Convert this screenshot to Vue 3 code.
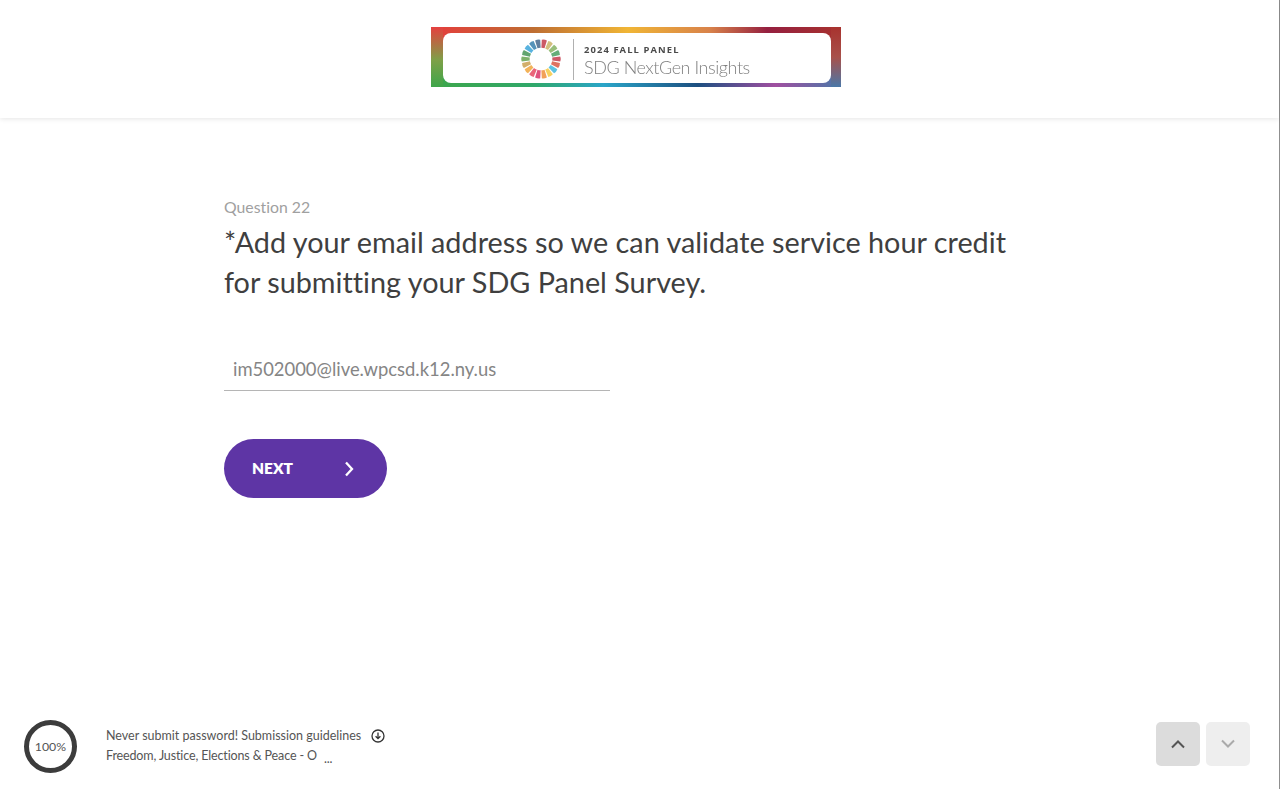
<script setup>
const colors = ['#c0303f','#c9b060','#7fae5a','#3f9a58','#c23040','#d8503a','#35b4dc','#f5c63a','#f08a30','#d8285f','#e5405a','#f0a030','#c79a45','#5f9e45','#3c8e4c','#2fa0d8','#2c78a8','#3a5f85']
const wedges = colors.map((color, i) => ({ color, angle: i * 20 + 10 }))
</script>

<template>
  <div class="page">
    <header class="top">
      <div class="banner">
        <div class="banner-inner">
          <svg class="wheel" width="40" height="40" viewBox="0 0 40 40">
            <path
              v-for="w in wedges"
              :key="w.angle"
              d="M17.400 0.800 Q20 -0.300 22.600 0.800 L21.600 8.800 Q20 8.500 18.400 8.800 Z"
              :fill="w.color"
              :transform="`rotate(${w.angle} 20 20)`"
            />
          </svg>
          <span class="divider"></span>
          <div class="banner-text">
            <div class="fall">2024 FALL PANEL</div>
            <div class="insights">SDG NextGen Insights</div>
          </div>
        </div>
      </div>
    </header>

    <main class="main">
      <div class="qnum">Question 22</div>
      <h1 class="title">*Add your email address so we can validate service hour credit for submitting your SDG Panel Survey.</h1>
      <div class="field">im502000@live.wpcsd.k12.ny.us</div>
      <button class="next">
        <span class="next-label">NEXT</span>
        <svg width="12" height="16" viewBox="0 0 12 16"><path d="M3 1.500 9 8l-6 6.500" fill="none" stroke="#fff" stroke-width="2.300"/></svg>
      </button>
    </main>

    <footer class="foot">
      <div class="progress">100%</div>
      <div class="notes">
        <div class="note-row">
          <span>Never submit password! Submission guidelines</span>
          <svg class="dl" width="14" height="14" viewBox="0 0 14 14">
            <circle cx="7" cy="7" r="6" fill="none" stroke="#333" stroke-width="1.300"/>
            <path d="M7 3.500v6M4.600 7.200 7 9.600l2.400-2.400" fill="none" stroke="#333" stroke-width="1.300"/>
          </svg>
        </div>
        <div class="note-row second">
          <span>Freedom, Justice, Elections &amp; Peace - O</span>
          <span class="dots">...</span>
        </div>
      </div>
      <div class="arrows">
        <button class="arrow up">
          <svg width="16" height="10" viewBox="0 0 16 10"><path d="M2 8.500 8 2.500l6 6" fill="none" stroke="#555" stroke-width="2"/></svg>
        </button>
        <button class="arrow down">
          <svg width="16" height="10" viewBox="0 0 16 10"><path d="M2 1.500l6 6 6-6" fill="none" stroke="#aaa" stroke-width="2"/></svg>
        </button>
      </div>
    </footer>
  </div>
</template>

<style>
html, body { margin: 0; background: #fff; overflow: hidden; }
</style>

<style scoped>
.page {
  height: 789px;
  display: flex;
  flex-direction: column;
  box-sizing: border-box;
  border-right: 1px solid #8f8f8f;
  font-family: "Lato", "Noto Sans", sans-serif;
  font-variant-ligatures: none;
  color: #3c3c3c;
  background: #fff;
}
.top {
  height: 118px;
  flex: none;
  display: flex;
  justify-content: center;
  align-items: flex-start;
  padding-top: 27px;
  box-sizing: border-box;
  box-shadow: 0 1px 5px rgba(0,0,0,.1);
}
.banner {
  width: 410px;
  height: 60px;
  margin-right: 7px;
  box-sizing: border-box;
  padding: 6px 10px 4px 12px;
  background:
    linear-gradient(180deg, #e5403f 0%, #7ea048 55%, #3ea64a 100%) left / 12px 100% no-repeat,
    linear-gradient(180deg, #a8322e 0%, #a8504a 50%, #4a78a8 100%) right / 10px 100% no-repeat,
    linear-gradient(90deg, #e53c3c 0%, #be6e32 25%, #f0b535 48%, #d8824a 68%, #952040 82%, #a8322e 100%) top / 100% 50% no-repeat,
    linear-gradient(90deg, #3ea64a 0%, #2fa86a 25%, #2aa5c8 42%, #1c4f80 65%, #a04fa0 84%, #4a78a8 100%) bottom / 100% 50% no-repeat;
}
.banner-inner {
  height: 100%;
  background: #fff;
  border-radius: 8px;
  display: flex;
  align-items: center;
  padding-left: 78px;
}
.wheel { flex: none; margin-top: 2px; filter: blur(0.6px); opacity: .8; }
.divider {
  width: 1px;
  height: 41px;
  margin: 2px 10px 0 12px;
  background: #b0b0b0;
}
.banner-text {
  display: flex;
  flex-direction: column;
  white-space: nowrap;
  margin-top: 5px;
  filter: blur(0.3px);
}
.fall {
  font: 700 9.400px/11px "Open Sans", sans-serif;
  letter-spacing: 1.100px;
  color: #4a4a4a;
  margin-bottom: 1px;
}
.insights {
  font: 300 18px/22px "Lato", sans-serif;
  letter-spacing: -0.450px;
  color: #808080;
}
.main {
  flex: 1;
  padding: 78px 0 0 224px;
  width: 800px;
}
.qnum {
  font-size: 15.800px;
  line-height: 22px;
  color: #a0a0a0;
}
.title {
  margin: 4px 0 0;
  font-size: 28.800px;
  line-height: 40px;
  font-weight: 400;
  color: #3f3f3f;
}
.field {
  margin-top: 47px;
  width: 386px;
  height: 42px;
  box-sizing: border-box;
  padding: 7px 0 0 9px;
  border-bottom: 1px solid #b5b5b5;
  font-size: 18.400px;
  line-height: 26px;
  color: #858585;
}
.next {
  margin-top: 48px;
  width: 163px;
  height: 59px;
  display: flex;
  align-items: center;
  justify-content: space-between;
  padding: 0 32px 0 28px;
  box-sizing: border-box;
  border: none;
  border-radius: 30px;
  background: #5e35a5;
  color: #fff;
  font: 800 15.500px/20px "Lato", sans-serif;
}
.next-label { padding-bottom: 2px; }
.foot {
  flex: none;
  height: 86px;
  display: flex;
  align-items: flex-start;
  padding: 17px 29px 0 24px;
  box-sizing: border-box;
}
.progress {
  width: 53px;
  height: 53px;
  box-sizing: border-box;
  border: 5px solid #3c3c3c;
  border-radius: 50%;
  display: flex;
  align-items: center;
  justify-content: center;
  font-size: 12.300px;
  color: #555;
}
.notes {
  margin-left: 29px;
  padding-top: 6px;
  flex: 1;
  font-size: 12.500px;
  line-height: 20px;
  color: #555;
}
.note-row { display: flex; align-items: center; }
.second { letter-spacing: -0.130px; }
.dl { margin-left: 10px; }
.dots { margin-left: 7px; line-height: 14px; padding-top: 6px; }
.arrows { display: flex; gap: 6px; padding-top: 2px; }
.arrow {
  width: 44px;
  height: 44px;
  border: none;
  border-radius: 5px;
  padding: 0;
  display: flex;
  align-items: center;
  justify-content: center;
}
.up { background: #dcdcdc; }
.down { background: #eeeeee; }
</style>
